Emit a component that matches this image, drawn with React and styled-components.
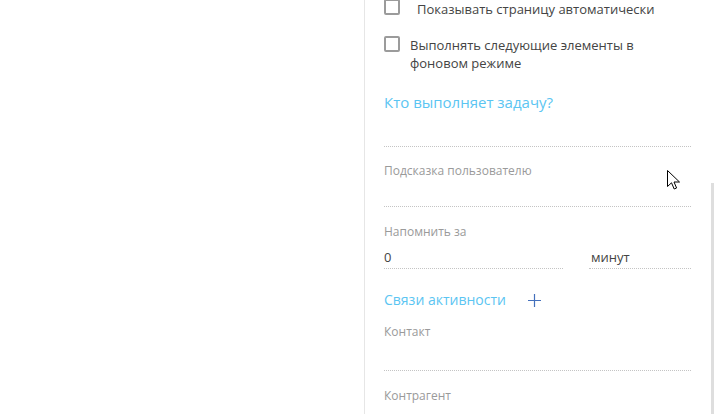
import React from 'react';
import styled, { createGlobalStyle } from 'styled-components';

// --- Global ---
const GlobalStyle = createGlobalStyle`
  html, body { margin: 0; padding: 0; background: #fff; overflow: hidden; }
  body { font-family: "Open Sans", "Liberation Sans", sans-serif; }
`;

// --- Styled ---
const Page = styled.div`
  display: flex; width: 714px; height: 414px; overflow: hidden; position: relative;
`;
const Blank = styled.div` flex: 0 0 364px; `;
const Panel = styled.div`
  flex: 1; display: flex; border-left: 1px solid #e6e6e6; padding-left: 19px;
`;
const Content = styled.div`
  width: 307px; display: flex; flex-direction: column;
`;
const ScrollTrack = styled.div`
  width: 3px; margin-left: 20px; margin-top: 183px; height: 231px; background: #dedede;
`;
const CheckRow = styled.label`
  display: flex; align-items: flex-start; gap: ${p => p.gap}px;
  margin-top: ${p => p.top || 0}px;
  font-size: 13px; line-height: 18px; color: #444;
`;
const Box = styled.span`
  flex: 0 0 auto; width: 12px; height: 12px; margin-top: ${p => p.shift}px;
  border: 2px solid #9b9b9b; border-radius: 2px; background: #fff;
`;
const LinkTitle = styled.div`
  margin-top: ${p => p.top}px; font-size: ${p => p.size}px; line-height: 20px;
  color: #5bc5f2; display: flex; align-items: center; gap: 22px;
`;
const Field = styled.div`
  margin-top: ${p => p.top || 0}px; display: flex; flex-direction: column;
`;
const Label = styled.div` font-size: 12px; line-height: 16px; color: #9a9a9a; `;
const Input = styled.div`
  height: ${p => p.h}px; border-bottom: 1px dotted #c4c4c4; box-sizing: border-box;
  font-size: 13px; line-height: 20px; color: #444; padding-top: ${p => p.pt || 0}px;
  padding-left: ${p => p.pl || 0}px;
`;
const Pair = styled.div` display: flex; gap: 26px; `;
const Cell = styled.div` flex: 0 0 ${p => p.w}px; `;
const Cursor = styled.svg` position: absolute; left: 667px; top: 170px; `;

const Plus = () => (
  <svg width="13" height="13" viewBox="0 0 13 13">
    <path d="M6.5 0V13M0 6.5H13" stroke="#4470bc" strokeWidth="1.2" />
  </svg>
);

export default function App() {
  return (
    <>
      <GlobalStyle />
      <Page>
        <Blank />
        <Panel>
          <Content>
            <CheckRow gap={17}>
              <Box shift={-1} />
              <span>Показывать страницу автоматически</span>
            </CheckRow>
            <CheckRow gap={10} top={18}>
              <Box shift={0} />
              <span>Выполнять следующие элементы в<br />фоновом режиме</span>
            </CheckRow>
            <LinkTitle top={20} size={15}>Кто выполняет задачу?</LinkTitle>
            <Input h={35} />
            <Field top={16}>
              <Label>Подсказка пользователю</Label>
              <Input h={28} />
            </Field>
            <Field top={17}>
              <Label>Напомнить за</Label>
              <Pair>
                <Cell w={179}><Input h={29} pt={7}>0</Input></Cell>
                <Cell w={102}><Input h={29} pt={7} pl={2}>минут</Input></Cell>
              </Pair>
            </Field>
            <LinkTitle top={21} size={14}>Связи активности <Plus /></LinkTitle>
            <Field top={14}>
              <Label>Контакт</Label>
              <Input h={31} />
            </Field>
            <Field top={17}>
              <Label>Контрагент</Label>
            </Field>
          </Content>
          <ScrollTrack />
        </Panel>
        <Cursor width="13" height="20" viewBox="0 0 13 20">
          <path d="M0.5 0.5V16.5L4.5 12.8L7.2 19L9.6 18L7 12H12.5Z" fill="#fff" stroke="#000" strokeWidth="1" strokeLinejoin="miter" />
        </Cursor>
      </Page>
    </>
  );
}
